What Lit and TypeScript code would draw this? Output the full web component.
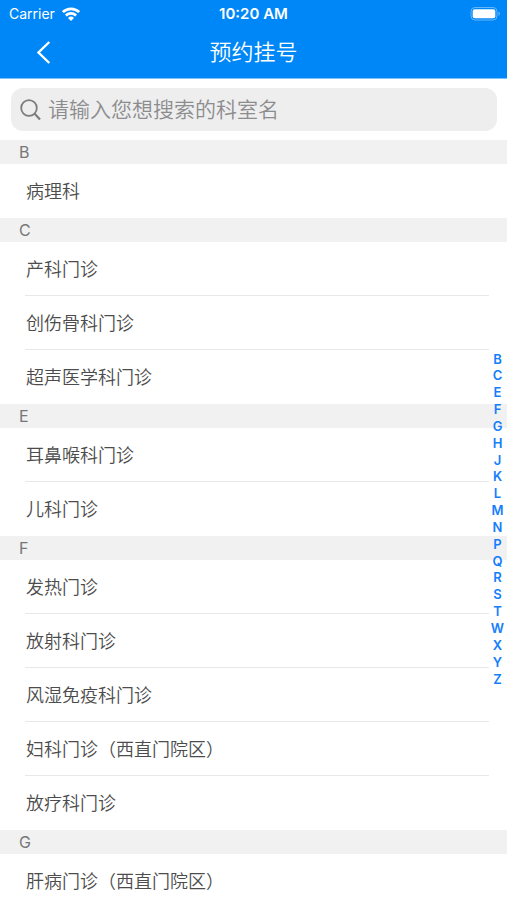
import { LitElement, html, css } from "lit";
import { customElement } from "lit/decorators.js";

interface Section {
  letter: string;
  items: string[];
}

const SECTIONS: Section[] = [
  { letter: "B", items: ["病理科"] },
  { letter: "C", items: ["产科门诊", "创伤骨科门诊", "超声医学科门诊"] },
  { letter: "E", items: ["耳鼻喉科门诊", "儿科门诊"] },
  {
    letter: "F",
    items: ["发热门诊", "放射科门诊", "风湿免疫科门诊", "妇科门诊（西直门院区）", "放疗科门诊"],
  },
  { letter: "G", items: ["肝病门诊（西直门院区）"] },
];

const INDEX = "BCEFGHJKLMNPQRSTWXYZ".split("");

@customElement("status-bar")
class StatusBar extends LitElement {
  static styles = css`
    :host {
      display: grid;
      grid-template-columns: 1fr auto 1fr;
      align-items: center;
      height: 28px;
      padding: 0 6px;
      color: #fff;
      font-size: 14px;
      line-height: 16px;
    }
    .carrier {
      display: flex;
      align-items: center;
      gap: 7px;
      padding-left: 3px;
    }
    .time {
      font-size: 15px;
      font-weight: 600;
    }
    .battery {
      justify-self: end;
    }
    svg {
      display: block;
    }
  `;

  render() {
    return html`
      <div class="carrier">
        <span>Carrier</span>
        <svg width="18" height="14" viewBox="0 0 18 14" aria-hidden="true">
          <g fill="none" stroke="#fff" stroke-width="2.7">
            <path d="M0.9 5.1a11.6 11.6 0 0 1 16.2 0" />
            <path d="M3.9 8.5a7.3 7.3 0 0 1 10.2 0" />
          </g>
          <path d="M9 14 6 10.9a4.3 4.3 0 0 1 6 0z" fill="#fff" />
        </svg>
      </div>
      <span class="time">10:20 AM</span>
      <svg class="battery" width="31" height="14" viewBox="0 0 31 14" aria-hidden="true">
        <rect x="1" y="0.5" width="26" height="12.5" rx="4" fill="none" stroke="#66b7fa" />
        <rect x="2.7" y="2.2" width="22.6" height="9" rx="2" fill="#fff" />
        <path d="M28.5 4.6a2.4 2.4 0 0 1 0 4.4z" fill="#66b7fa" />
      </svg>
    `;
  }
}

@customElement("app-root")
class AppRoot extends LitElement {
  static styles = css`
    :host {
      display: flex;
      flex-direction: column;
      height: 100vh;
      background: #fff;
      font-family: Inter, "Noto Sans CJK SC", sans-serif;
    }
    .top {
      flex: none;
      background: #0087f7;
      border-bottom: 1px solid #7cc3fb;
    }
    .nav {
      display: grid;
      grid-template-columns: 1fr auto 1fr;
      align-items: center;
      height: 50px;
      padding: 0 28px;
      box-sizing: border-box;
      color: #fff;
    }
    .back {
      justify-self: start;
      display: flex;
      padding: 4px 8px;
      border: 0;
      background: none;
      color: inherit;
    }
    h1 {
      margin: 0;
      padding-bottom: 2px;
      font-size: 22px;
      line-height: 32px;
      font-weight: 350;
    }
    .search {
      flex: none;
      display: flex;
      align-items: center;
      gap: 7px;
      height: 43px;
      margin: 9px 10px 9px 11px;
      padding: 0 9px;
      border-radius: 12px;
      background: #eeeeee;
      box-sizing: border-box;
    }
    .search svg {
      flex: none;
    }
    .search input {
      flex: 1;
      min-width: 0;
      padding: 0;
      border: 0;
      outline: 0;
      background: none;
      font: inherit;
      font-size: 21px;
      line-height: 32px;
      font-weight: 350;
      color: #555;
    }
    .search input::placeholder {
      color: #8c8c8f;
      opacity: 1;
    }
    .body {
      flex: 1;
      min-height: 0;
      position: relative;
    }
    .list {
      height: 100%;
      overflow-y: auto;
      scrollbar-width: none;
    }
    h2 {
      margin: 0;
      padding: 0 19px;
      background: #f1f1f1;
      color: #777;
      font-size: 16px;
      line-height: 24px;
      font-weight: 400;
    }
    ul {
      margin: 0;
      padding: 0 18px 0 25px;
      list-style: none;
    }
    li {
      height: 54px;
      box-sizing: border-box;
      border-bottom: 1px solid #e8e8e8;
    }
    li:last-child {
      border-bottom-color: transparent;
    }
    .item {
      display: block;
      width: 100%;
      height: 100%;
      padding: 2px 0 0 1px;
      border: 0;
      background: none;
      text-align: left;
      font: inherit;
      font-size: 18px;
      line-height: 26px;
      font-weight: 350;
      color: #4c4c4c;
    }
    .index {
      position: absolute;
      top: 0;
      bottom: 0;
      right: 0;
      display: flex;
      flex-direction: column;
      justify-content: center;
      width: 19px;
    }
    .letters {
      display: flex;
      flex-direction: column;
      height: 337px;
    }
    .letters a {
      flex: 1;
      min-height: 0;
      color: #147efb;
      font-size: 13px;
      line-height: 15px;
      font-weight: 600;
      text-align: center;
      text-decoration: none;
    }
  `;

  private jump(event: Event, letter: string) {
    event.preventDefault();
    this.renderRoot.querySelector(`#section-${letter}`)?.scrollIntoView();
  }

  render() {
    return html`
      <header class="top">
        <status-bar></status-bar>
        <nav class="nav">
          <button class="back" aria-label="返回">
            <svg width="15" height="24" viewBox="0 0 15 24" fill="none" aria-hidden="true">
              <path d="M13.3 1 2.5 11.5 13.3 22" stroke="currentColor" stroke-width="2.4" />
            </svg>
          </button>
          <h1>预约挂号</h1>
        </nav>
      </header>
      <label class="search">
        <svg width="21" height="22" viewBox="0 0 21 22" fill="none" stroke="#7d7d80" aria-hidden="true">
          <circle cx="9" cy="9" r="7.8" stroke-width="1.8" />
          <path d="M14.4 14.6 20 20.6" stroke-width="2.2" />
        </svg>
        <input type="search" aria-label="搜索科室" placeholder="请输入您想搜索的科室名" />
      </label>
      <main class="body">
        <div class="list">
          ${SECTIONS.map(
            (section) => html`
              <section id="section-${section.letter}">
                <h2>${section.letter}</h2>
                <ul>
                  ${section.items.map(
                    (item) => html`<li><button class="item">${item}</button></li>`
                  )}
                </ul>
              </section>
            `
          )}
        </div>
        <nav class="index" aria-label="字母索引">
          <div class="letters">
            ${INDEX.map(
              (letter) => html`<a
                href="#section-${letter}"
                @click=${(event: Event) => this.jump(event, letter)}
                >${letter}</a
              >`
            )}
          </div>
        </nav>
      </main>
    `;
  }
}
